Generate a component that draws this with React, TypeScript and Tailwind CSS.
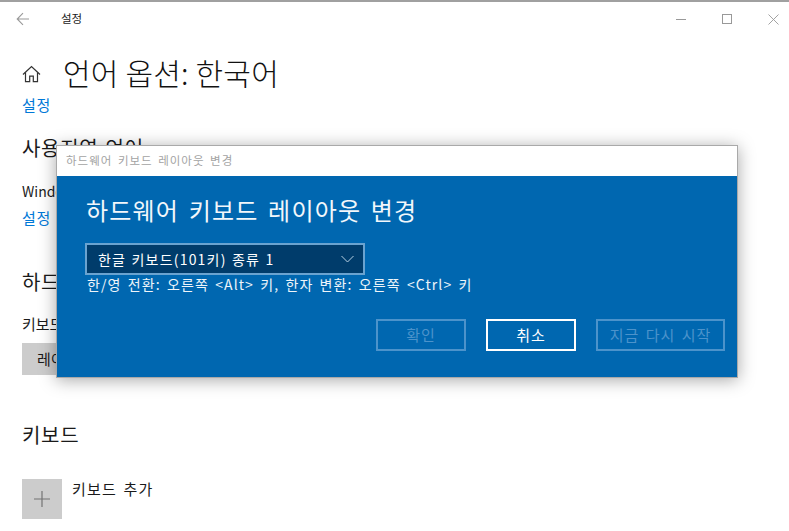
const font = { fontFamily: '"Noto Sans CJK KR", "Noto Sans", sans-serif' };

function HomeIcon() {
  return (
    <svg className="mt-[4px]" width="19" height="18" viewBox="0 0 19 18" fill="none" stroke="#333" strokeWidth="1.2">
      <path d="M1 9.5 9.5 1.5 18 9.5" />
      <path d="M3.5 7.5v9.2h4.2v-5.5h3.6v5.5h4.2V7.5" />
    </svg>
  );
}

function Section({ title, children }: { title: string; children?: React.ReactNode }) {
  return (
    <div>
      <div className="text-[20px] leading-[28px] text-[#1a1a1a] tracking-[0.7px] [word-spacing:2px]">{title}</div>
      {children}
    </div>
  );
}

export default function App() {
  return (
    <div className="relative w-[789px] h-[531px] overflow-hidden bg-white border-t-2 border-[#a0a0a0]" style={font}>
      {/* title bar */}
      <div className="flex items-center h-[34px]">
        <svg className="ml-[16px]" width="14" height="14" viewBox="0 0 14 14" fill="none" stroke="#999" strokeWidth="1.1">
          <path d="M13 7H1.5M7 1.2 1.2 7 7 12.8" />
        </svg>
        <span className="ml-[31px] text-[11.5px] text-[#1a1a1a]">설정</span>
        <div className="ml-auto flex items-center gap-[36px] pr-[10px]">
          <div className="w-[10px] h-px bg-[#999]" />
          <div className="w-[10px] h-[10px] border border-[#999]" />
          <svg width="11" height="11" viewBox="0 0 11 11" stroke="#999" strokeWidth="0.9">
            <path d="M.5.5l10 10M10.5.5l-10 10" />
          </svg>
        </div>
      </div>

      {/* page */}
      <div className="pl-[22px]">
        <div className="flex items-center h-[40px] mt-[16px]">
          <HomeIcon />
          <h1 className="ml-[22px] text-[30px] leading-[40px] text-[#111] font-light tracking-[0.2px]">언어 옵션: 한국어</h1>
        </div>
        <a className="block text-[15px] leading-[20px] text-[#0078d7] mt-[3px] tracking-[0.8px]">설정</a>

        <div className="mt-[19px]">
          <Section title="사용지역 언어">
            <div className="mt-[19px] text-[14px] leading-[20px] text-[#1a1a1a]">Windows</div>
            <a className="block mt-[7px] text-[15px] leading-[20px] text-[#0078d7] tracking-[0.8px]">설정</a>
          </Section>
        </div>

        <div className="mt-[40px]">
          <Section title="하드웨어 키보드">
            <div className="mt-[18px] text-[15px] leading-[20px] text-[#1a1a1a]">키보드 레이아웃</div>
            <div className="mt-[9px] w-[120px] h-[32px] bg-[#cccccc] flex items-center pl-[15px] text-[15px] text-[#1a1a1a]">레이아웃</div>
          </Section>
        </div>

        <div className="mt-[46px]">
          <Section title="키보드">
            <div className="flex mt-[30px]">
              <div className="w-[40px] h-[40px] bg-[#cccccc] flex items-center justify-center">
                <svg width="16" height="16" viewBox="0 0 16 16" stroke="#737373" strokeWidth="1.2">
                  <path d="M8 0v16M0 8h16" />
                </svg>
              </div>
              <span className="ml-[10px] text-[15px] leading-[20px] text-[#1a1a1a] tracking-[1.2px] [word-spacing:2px]">키보드 추가</span>
            </div>
          </Section>
        </div>
      </div>

      {/* dialog */}
      <div className="absolute left-[56px] top-[143px] w-[682px] h-[233px] border border-[#a9a9a9] shadow-[0_2px_16px_rgba(0,0,0,0.35)] bg-white flex flex-col">
        <div className="h-[30px] flex items-center pl-[9px] text-[11.5px] text-[#a3a3a3] tracking-[1px] [word-spacing:2px]">하드웨어 키보드 레이아웃 변경</div>
        <div className="flex-1 bg-[#0067b0] pl-[28px] pr-[12px] text-white">
          <div className="mt-[17px] pl-px text-[24px] leading-[34px] text-[#f2f7fb] tracking-[1.2px] [word-spacing:3px]">하드웨어 키보드 레이아웃 변경</div>
          <div className="mt-[16px] w-[280px] h-[32px] bg-[#003c6b] border-2 border-[#6aa3d0] flex items-center justify-between pl-[11px] pr-[9px] text-[14px] tracking-[1.2px] [word-spacing:1px]">
            <span>한글 키보드(101키) 종류 1</span>
            <svg width="13" height="8" viewBox="0 0 13 8" fill="none" stroke="#b7cfe2" strokeWidth="1">
              <path d="M.5 1 6.5 7l6-6" />
            </svg>
          </div>
          <div className="-mt-px text-[14px] leading-[20px] text-[#eef5fa] pl-[2px] tracking-[1.1px] [word-spacing:2px]">
            한/영 전환: 오른쪽 &lt;Alt&gt; 키, 한자 변환: 오른쪽 &lt;Ctrl&gt; 키
          </div>
          <div className="mt-[25px] flex justify-end gap-[20px]">
            <button className="w-[90px] h-[32px] border-2 border-[#4c93cb] text-[15px] text-[#4c93cb] tracking-[1px]">확인</button>
            <button className="w-[90px] h-[32px] border-2 border-white text-[15px] text-white tracking-[1px]">취소</button>
            <button className="w-[129px] h-[32px] border-2 border-[#4c93cb] text-[15px] text-[#4c93cb] tracking-[1px] [word-spacing:2px]">지금 다시 시작</button>
          </div>
        </div>
      </div>
    </div>
  );
}
